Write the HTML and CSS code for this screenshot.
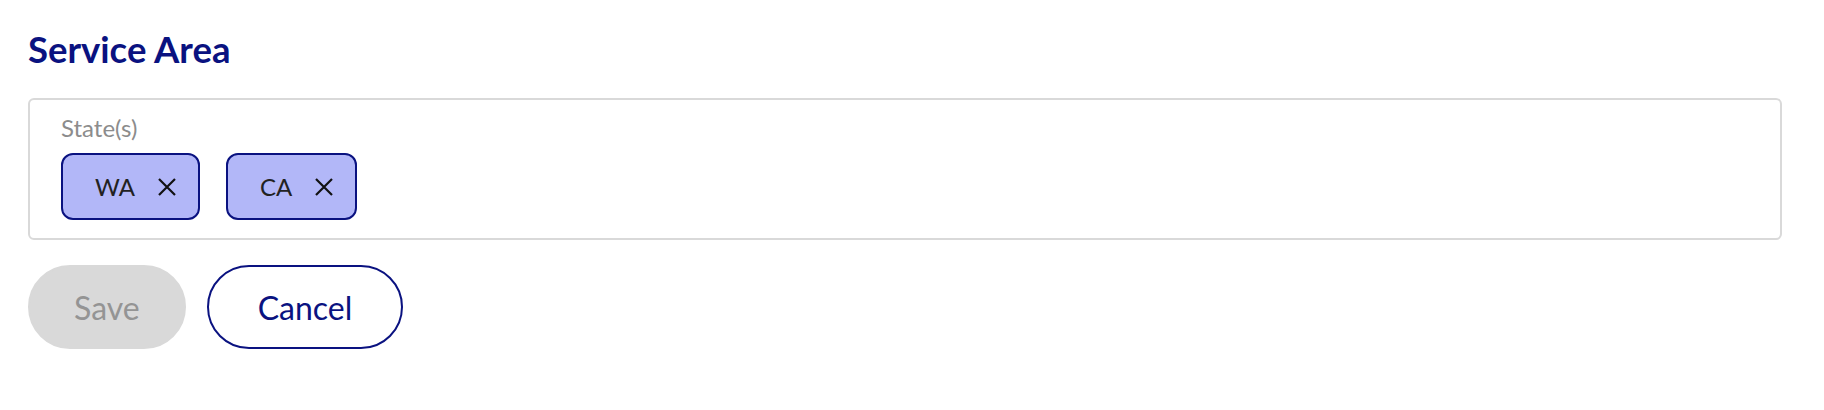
FILE: index.html
```html
<!DOCTYPE html>
<html lang="en">
<head>
    <meta charset="UTF-8">
    <meta name="viewport" content="width=device-width, initial-scale=1.0">
    <title>Service Area</title>
    <link rel="stylesheet" href="styles.css">
</head>
<body>
    <div class="page">
        <h2 class="title">Service Area</h2>

        <div class="field">
            <div class="field-label">State(s)</div>
            <div class="chips">
                <span class="chip">WA
                    <button class="chip-remove" aria-label="Remove WA">
                        <svg viewBox="0 0 24 24" width="24" height="24"><path d="M4 4L20 20M20 4L4 20" stroke="#111" stroke-width="2.2" fill="none"/></svg>
                    </button>
                </span>
                <span class="chip">CA
                    <button class="chip-remove" aria-label="Remove CA">
                        <svg viewBox="0 0 24 24" width="24" height="24"><path d="M4 4L20 20M20 4L4 20" stroke="#111" stroke-width="2.2" fill="none"/></svg>
                    </button>
                </span>
            </div>
        </div>

        <div class="actions">
            <button class="btn btn-save" disabled>Save</button>
            <button class="btn btn-cancel">Cancel</button>
        </div>
    </div>
</body>
</html>
```

FILE: styles.css
```css
body {
    margin: 0;
    font-family: Lato, "Noto Sans", sans-serif;
    background: #fff;
}
.page {
    padding: 28px 42px 0 28px;
}
.title {
    margin: 0 0 27px 0;
    font-size: 36.5px;
    line-height: 43px;
    font-weight: 700;
    color: #0a1280;
}
.field {
    border: 2px solid #d9d9d9;
    border-radius: 6px;
    padding: 14px 30px 18px 31px;
}
.field-label {
    font-size: 24px;
    line-height: 28px;
    color: #8c8c8c;
    margin-bottom: 11px;
}
.chips {
    display: flex;
    gap: 26px;
}
.chip {
    display: inline-flex;
    align-items: center;
    height: 63px;
    padding: 0 19px 0 32px;
    gap: 20px;
    background: #b2b7f8;
    border: 2px solid #0a1280;
    border-radius: 12px;
    font-size: 24px;
    color: #222;
}
.chip-remove {
    border: none;
    background: none;
    padding: 0;
    width: 24px;
    height: 24px;
    cursor: pointer;
}
.chip-remove svg {
    display: block;
}
.actions {
    display: flex;
    gap: 21px;
    margin-top: 25px;
}
.btn {
    height: 84px;
    border-radius: 42px;
    font-family: inherit;
    font-size: 32px;
    border: 2px solid transparent;
    cursor: pointer;
}
.btn-save {
    padding: 0 44px;
    background: #d9d9d9;
    color: #949494;
    border-color: #d9d9d9;
}
.btn-cancel {
    padding: 0 49px;
    background: #fff;
    color: #0a1280;
    border-color: #0a1280;
}
```
